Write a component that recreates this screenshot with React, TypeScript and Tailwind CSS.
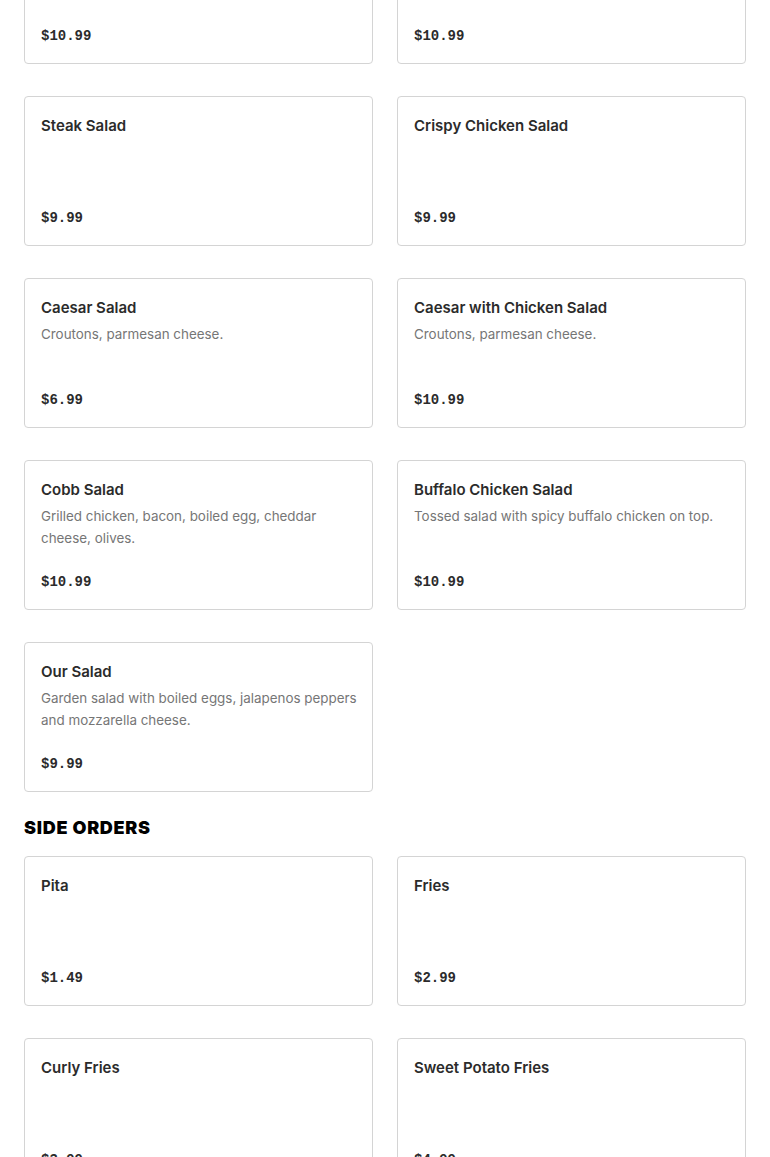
const salads = [
  { name: "Greek Salad", desc: "", price: "$10.99" },
  { name: "Chicken Salad", desc: "", price: "$10.99" },
  { name: "Steak Salad", desc: "", price: "$9.99" },
  { name: "Crispy Chicken Salad", desc: "", price: "$9.99" },
  { name: "Caesar Salad", desc: "Croutons, parmesan cheese.", price: "$6.99" },
  { name: "Caesar with Chicken Salad", desc: "Croutons, parmesan cheese.", price: "$10.99" },
  { name: "Cobb Salad", desc: "Grilled chicken, bacon, boiled egg, cheddar cheese, olives.", price: "$10.99" },
  { name: "Buffalo Chicken Salad", desc: "Tossed salad with spicy buffalo chicken on top.", price: "$10.99" },
  { name: "Our Salad", desc: "Garden salad with boiled eggs, jalapenos peppers and mozzarella cheese.", price: "$9.99" },
];

const sides = [
  { name: "Pita", desc: "", price: "$1.49" },
  { name: "Fries", desc: "", price: "$2.99" },
  { name: "Curly Fries", desc: "", price: "$3.99" },
  { name: "Sweet Potato Fries", desc: "", price: "$4.99" },
];

type Item = { name: string; desc: string; price: string };

function ItemCard({ item }: { item: Item }) {
  return (
    <div className="flex h-[150px] flex-col rounded border border-[#d4d4d4] bg-white px-4 pt-4 pb-[15px]">
      <div className="text-[15px] leading-[26px] font-semibold text-[#2b2b2b]">{item.name}</div>
      {item.desc && (
        <div className="mt-[2px] mr-[-8px] text-[13.4px] leading-[22px] text-[#767676]">{item.desc}</div>
      )}
      <div
        className="mt-auto text-[14px] leading-[24px] font-bold text-[#2b2b2b]"
        style={{ fontFamily: '"Liberation Mono", monospace' }}
      >
        {item.price}
      </div>
    </div>
  );
}

export default function App() {
  return (
    <div
      className="h-[1157px] overflow-hidden bg-white"
      style={{ fontFamily: 'Inter, "Noto Sans", sans-serif' }}
    >
      <div className="mt-[-86px] px-6">
        <div className="grid grid-cols-2 gap-x-6 gap-y-8">
          {salads.map((s) => (
            <ItemCard key={s.name} item={s} />
          ))}
        </div>

        <h2 className="mt-[22px] mb-[14px] text-[18px] leading-[28px] font-black tracking-[0.04em] text-black">
          SIDE ORDERS
        </h2>

        <div className="grid grid-cols-2 gap-x-6 gap-y-8">
          {sides.map((s) => (
            <ItemCard key={s.name} item={s} />
          ))}
        </div>
      </div>
    </div>
  );
}
